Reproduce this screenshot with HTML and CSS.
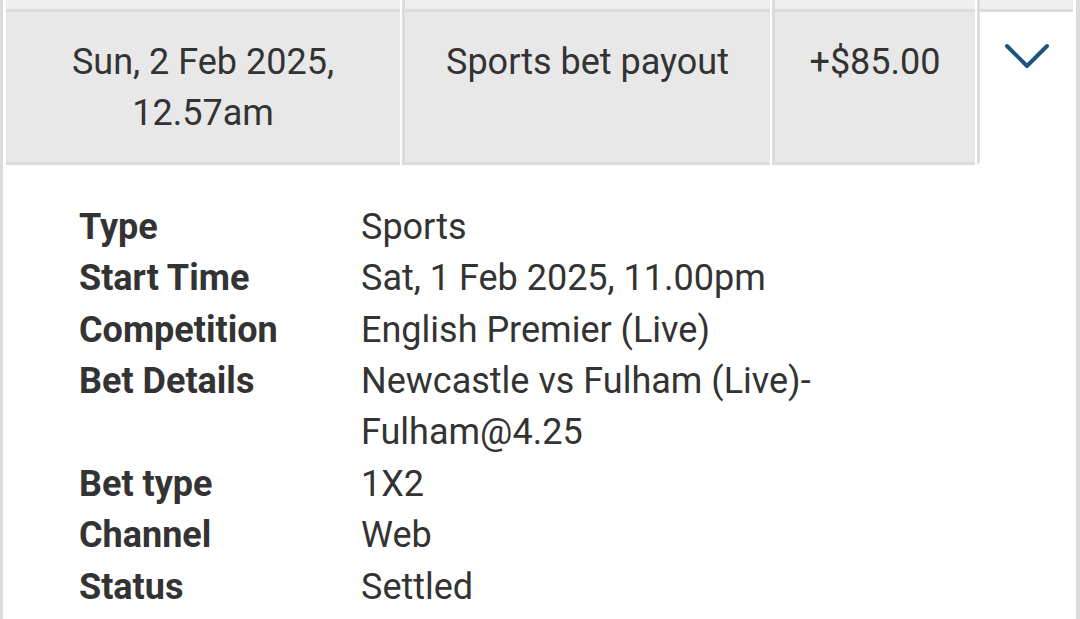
FILE: index.html
```html
<!DOCTYPE html>
<html lang="en">
<head>
    <meta charset="UTF-8">
    <meta name="viewport" content="width=device-width, initial-scale=1.0">
    <title>Transactions</title>

    <link rel="stylesheet" href="styles.css">

</head>
<body>
    <div class="list">
        <div class="row row-prev">
            <div class="cell"></div>
            <div class="cell"></div>
            <div class="cell"></div>
            <div class="cell"></div>
        </div>

        <div class="row row-open">
            <div class="cell">Sun, 2 Feb 2025,<br>12.57am</div>
            <div class="cell">Sports bet payout</div>
            <div class="cell">+$85.00</div>
            <div class="cell cell-toggle">
                <svg class="chevron" width="46" height="28" viewBox="0 0 46 28">
                    <polyline points="3,3 23,23 43,3" fill="none" stroke="#1b557d" stroke-width="4" stroke-linecap="round" stroke-linejoin="round"/>
                </svg>
            </div>
        </div>

        <div class="details">
            <div class="label">Type</div>
            <div class="value">Sports</div>

            <div class="label">Start Time</div>
            <div class="value">Sat, 1 Feb 2025, 11.00pm</div>

            <div class="label">Competition</div>
            <div class="value">English Premier (Live)</div>

            <div class="label">Bet Details</div>
            <div class="value">Newcastle vs Fulham (Live)-Fulham@4.25</div>

            <div class="label">Bet type</div>
            <div class="value">1X2</div>

            <div class="label">Channel</div>
            <div class="value">Web</div>

            <div class="label">Status</div>
            <div class="value">Settled</div>
        </div>
    </div>
</body>
</html>
```

FILE: styles.css
```css
* {
    margin: 0;
    padding: 0;
    box-sizing: border-box;
}

html, body {
    height: 100%;
}

body {
    background-color: #FFF;
    color: #333;
    font-family: Roboto, "Noto Sans", sans-serif;
    font-size: 36px;
    line-height: 51.4px;
    overflow: hidden;
}

.list {
    min-height: 100%;
    border-left: 3px solid #dcdcdc;
    border-right: 4px solid #dcdcdc;
    padding: 0 3px;
}

.row {
    display: grid;
    grid-template-columns: 394px 368px 203px 1fr;
    column-gap: 2px;
}

.cell {
    background-color: #e8e8e8;
    border-bottom: 3px solid #dcdcdc;
    text-align: center;
}

.cell + .cell {
    border-left: 3px solid #dcdcdc;
}

.row-prev .cell {
    height: 12px;
    background-color: #efefef;
}

.row-open .cell {
    padding: 25px 10px 22px;
}

.row-open .cell-toggle {
    background-color: #FFF;
    border-bottom-color: #FFF;
    padding-top: 31px;
}

.chevron {
    display: block;
    margin: 0 auto;
}

.details {
    display: grid;
    grid-template-columns: 282px 600px;
    padding: 37px 0 0 73px;
}

.label {
    font-weight: 700;
}
```
